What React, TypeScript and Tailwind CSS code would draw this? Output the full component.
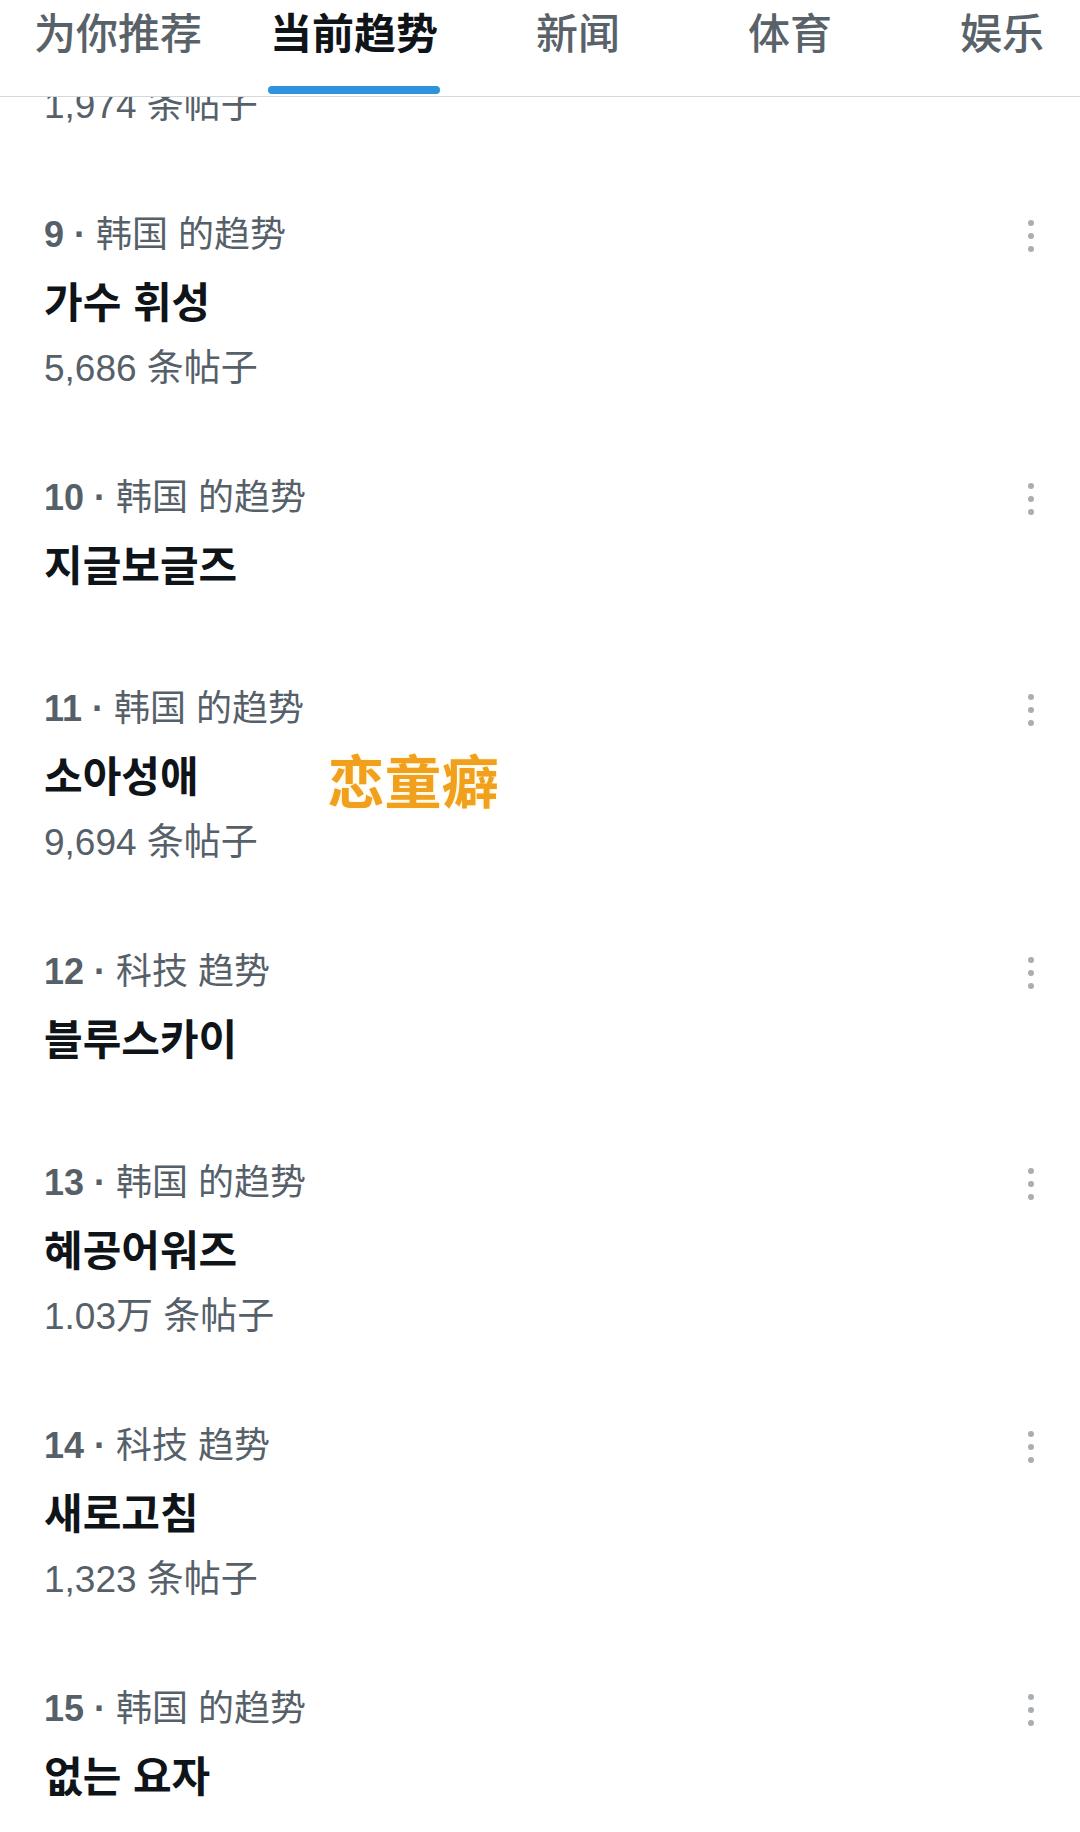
import React from "react";

const FONT = { fontFamily: '"Liberation Sans", "Noto Sans CJK SC", "Noto Sans CJK KR", sans-serif' };
const FONT_KR = { fontFamily: '"Liberation Sans", "Noto Sans CJK KR", "Noto Sans CJK SC", sans-serif' };

type Trend = {
  rank: number;
  category: string;
  title: string;
  posts?: string;
  note?: string;
};

const tabs = ["为你推荐", "当前趋势", "新闻", "体育", "娱乐"];

const trends: Trend[] = [
  { rank: 9, category: "韩国 的趋势", title: "가수 휘성", posts: "5,686 条帖子" },
  { rank: 10, category: "韩国 的趋势", title: "지글보글즈" },
  { rank: 11, category: "韩国 的趋势", title: "소아성애", posts: "9,694 条帖子", note: "恋童癖" },
  { rank: 12, category: "科技 趋势", title: "블루스카이" },
  { rank: 13, category: "韩国 的趋势", title: "혜공어워즈", posts: "1.03万 条帖子" },
  { rank: 14, category: "科技 趋势", title: "새로고침", posts: "1,323 条帖子" },
  { rank: 15, category: "韩国 的趋势", title: "없는 요자" },
];

function MoreDots() {
  return (
    <div className="flex flex-col items-center gap-[7px] pt-[11px]">
      <span className="block h-[6px] w-[6px] rounded-full bg-[#a9aeb3]" />
      <span className="block h-[6px] w-[6px] rounded-full bg-[#a9aeb3]" />
      <span className="block h-[6px] w-[6px] rounded-full bg-[#a9aeb3]" />
    </div>
  );
}

function TrendRow({ t }: { t: Trend }) {
  return (
    <div className="flex flex-row justify-between pt-[39px] pb-[38px] pl-[44px] pr-[46px]">
      <div className="flex flex-col">
        <div className="h-[52px] text-[36px] leading-[52px] text-[#566069]" style={FONT}>
          <span className="font-bold">{t.rank}</span>
          <span className="font-bold"> · </span>
          <span>{t.category}</span>
        </div>
        <div className="flex h-[82px] flex-row items-center pt-[4px]">
          <span className="text-[42px] font-bold leading-[78px] text-[#0f1419]" style={FONT_KR}>
            {t.title}
          </span>
          {t.note && (
            <span
              className="ml-[129px] text-[57px] font-bold leading-[78px] text-[#f0a01c] [text-shadow:0_0_4px_#fff3d0]"
              style={{ fontFamily: '"Noto Sans CJK SC", sans-serif' }}
            >
              {t.note}
            </span>
          )}
        </div>
        {t.posts && (
          <div className="h-[52px] text-[37px] leading-[52px] text-[#566069]" style={FONT}>
            {t.posts}
          </div>
        )}
      </div>
      <MoreDots />
    </div>
  );
}

export default function App() {
  return (
    <div className="flex h-[1832px] w-[1080px] flex-col overflow-hidden bg-white">
      {/* tab bar */}
      <div className="flex h-[97px] flex-none flex-row overflow-hidden border-b border-[#d3d8db]">
        {tabs.map((tab, i) => {
          const active = i === 1;
          return (
            <div key={tab} className="flex h-full min-w-[212px] flex-none flex-col items-center px-[34px]">
              <div className="flex flex-1 flex-col items-center">
                <span
                  className={
                    active
                      ? "pt-[11px] text-[42px] font-bold leading-[48px] text-[#0f1419]"
                      : "pt-[11px] text-[42px] font-medium leading-[48px] text-[#5a6269]"
                  }
                  style={FONT}
                >
                  {tab}
                </span>
                <div className="flex-1" />
                {active ? (
                  <div className="mb-[2px] h-[8px] w-[calc(100%+4px)] rounded-full bg-[#2d94dc]" />
                ) : (
                  <div className="mb-[2px] h-[8px]" />
                )}
              </div>
            </div>
          );
        })}
      </div>

      {/* list, scrolled */}
      <div className="flex flex-1 flex-col overflow-hidden">
        <div className="pb-[38px] pl-[44px]">
          <div className="flex h-[35px] flex-col justify-end overflow-hidden">
            <div className="h-[52px] flex-none text-[37px] leading-[52px] text-[#566069]" style={FONT}>
              1,974 条帖子
            </div>
          </div>
        </div>
        {trends.map((t) => (
          <TrendRow key={t.rank} t={t} />
        ))}
      </div>
    </div>
  );
}
